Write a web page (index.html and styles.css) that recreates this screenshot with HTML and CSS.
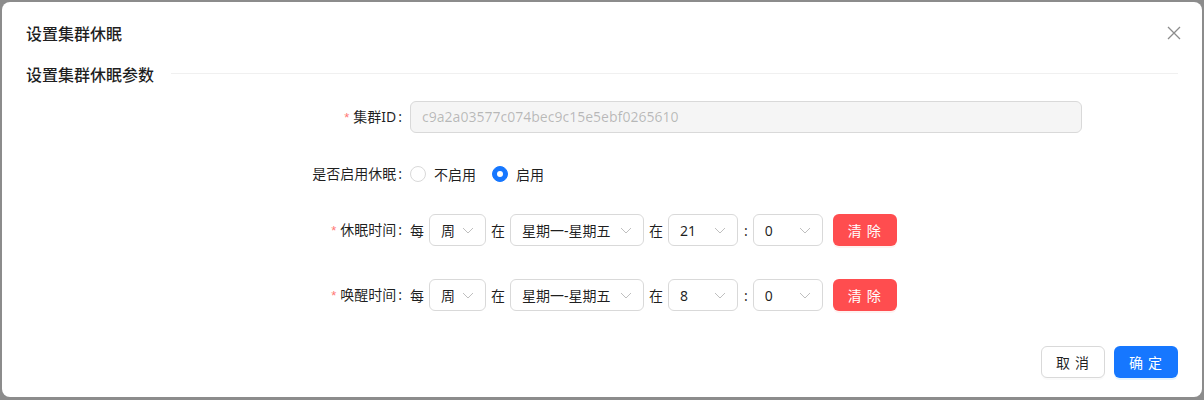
FILE: index.html
```html
<!DOCTYPE html>
<html lang="zh-CN">
<head>
<meta charset="utf-8">
<title>设置集群休眠</title>
<link rel="stylesheet" href="styles.css">
</head>
<body>
<div class="modal">
  <div class="modal-header">
    <div class="modal-title">设置集群休眠</div>
    <button class="close" aria-label="关闭">
      <svg width="14" height="14" viewBox="0 0 14 14"><path d="M1 1L13 13M13 1L1 13" stroke="#8c8c8c" stroke-width="1.3" fill="none"/></svg>
    </button>
  </div>
  <div class="divider"><span class="divider-text">设置集群休眠参数</span><span class="divider-line"></span></div>
  <form class="form">
    <div class="form-item item-id">
      <div class="label"><span class="req">*</span>集群ID<span class="colon">:</span></div>
      <div class="control">
        <div class="input disabled">c9a2a03577c074bec9c15e5ebf0265610</div>
      </div>
    </div>
    <div class="form-item item-radio">
      <div class="label">是否启用休眠<span class="colon">:</span></div>
      <div class="control">
        <label class="radio"><span class="radio-dot"></span><span class="radio-text">不启用</span></label>
        <label class="radio checked"><span class="radio-dot"></span><span class="radio-text">启用</span></label>
      </div>
    </div>
    <div class="form-item item-sleep">
      <div class="label"><span class="req">*</span>休眠时间<span class="colon">:</span></div>
      <div class="control">
        <span class="word first">每</span>
        <div class="select w-week"><span>周</span><svg class="arrow" width="12" height="12" viewBox="0 0 12 12"><path d="M1 4L6 9L11 4" stroke="#bfbfbf" stroke-width="1" fill="none"/></svg></div>
        <span class="word">在</span>
        <div class="select w-day"><span>星期一-星期五</span><svg class="arrow" width="12" height="12" viewBox="0 0 12 12"><path d="M1 4L6 9L11 4" stroke="#bfbfbf" stroke-width="1" fill="none"/></svg></div>
        <span class="word">在</span>
        <div class="select w-num"><span>21</span><svg class="arrow" width="12" height="12" viewBox="0 0 12 12"><path d="M1 4L6 9L11 4" stroke="#bfbfbf" stroke-width="1" fill="none"/></svg></div>
        <span class="word colon-word">:</span>
        <div class="select w-num"><span>0</span><svg class="arrow" width="12" height="12" viewBox="0 0 12 12"><path d="M1 4L6 9L11 4" stroke="#bfbfbf" stroke-width="1" fill="none"/></svg></div>
        <button type="button" class="btn danger">清 除</button>
      </div>
    </div>
    <div class="form-item item-wake">
      <div class="label"><span class="req">*</span>唤醒时间<span class="colon">:</span></div>
      <div class="control">
        <span class="word first">每</span>
        <div class="select w-week"><span>周</span><svg class="arrow" width="12" height="12" viewBox="0 0 12 12"><path d="M1 4L6 9L11 4" stroke="#bfbfbf" stroke-width="1" fill="none"/></svg></div>
        <span class="word">在</span>
        <div class="select w-day"><span>星期一-星期五</span><svg class="arrow" width="12" height="12" viewBox="0 0 12 12"><path d="M1 4L6 9L11 4" stroke="#bfbfbf" stroke-width="1" fill="none"/></svg></div>
        <span class="word">在</span>
        <div class="select w-num"><span>8</span><svg class="arrow" width="12" height="12" viewBox="0 0 12 12"><path d="M1 4L6 9L11 4" stroke="#bfbfbf" stroke-width="1" fill="none"/></svg></div>
        <span class="word colon-word">:</span>
        <div class="select w-num"><span>0</span><svg class="arrow" width="12" height="12" viewBox="0 0 12 12"><path d="M1 4L6 9L11 4" stroke="#bfbfbf" stroke-width="1" fill="none"/></svg></div>
        <button type="button" class="btn danger">清 除</button>
      </div>
    </div>
  </form>
  <div class="footer">
    <button type="button" class="btn default">取 消</button>
    <button type="button" class="btn primary">确 定</button>
  </div>
</div>
</body>
</html>
```
FILE: styles.css
```css
* { box-sizing: border-box; }
html, body { margin: 0; height: 400px; overflow: hidden; }
body {
  background: #8c8c8c;
  padding: 2px 2px 3px 2px;
  font-family: "Noto Sans", "Noto Sans CJK SC", sans-serif;
  font-size: 14px;
  color: rgba(0, 0, 0, 0.88);
}
.modal {
  background: #fff;
  border-radius: 8px;
  height: 395px;
  padding: 20px 24px 0 24px;
}
.modal-header {
  display: flex;
  align-items: center;
  justify-content: space-between;
  height: 22px;
}
.modal-title {
  font-family: "Noto Sans CJK SC", sans-serif;
  font-size: 16px;
  font-weight: 500;
  line-height: 22px;
}
.close {
  border: 0;
  background: none;
  padding: 0;
  margin-right: -3px;
  width: 14px;
  height: 14px;
  display: flex;
}
.divider {
  display: flex;
  align-items: center;
  margin-top: 18px;
  height: 24px;
}
.divider-text {
  font-family: "Noto Sans CJK SC", sans-serif;
  font-size: 16px;
  font-weight: 500;
  line-height: 24px;
}
.divider-line {
  flex: 1;
  border-top: 1px solid #f0f0f0;
  margin-left: 17px;
  margin-top: -2px;
}
.form { margin-top: 15px; }
.form-item {
  display: flex;
  align-items: center;
  height: 32px;
  margin-bottom: 24px;
}
.item-id { margin-bottom: 25px; }
.item-sleep { margin-bottom: 33px; }
.label {
  width: 384px;
  flex: none;
  text-align: right;
  padding-right: 8px;
  line-height: 32px;
  white-space: nowrap;
}
.req {
  color: #ff7875;
  margin-right: 4px;
  font-family: "Liberation Sans", sans-serif;
  font-size: 13px;
}
.colon { margin-left: 2px; }
.control {
  width: 672px;
  display: flex;
  align-items: center;
  height: 32px;
}
.input {
  width: 100%;
  height: 32px;
  border: 1px solid #d9d9d9;
  border-radius: 6px;
  padding: 0 11px;
  line-height: 30px;
}
.input.disabled {
  background: #f5f5f5;
  color: rgba(0, 0, 0, 0.25);
}
.radio {
  display: inline-flex;
  align-items: center;
  margin-right: 8px;
  cursor: pointer;
}
.radio-dot {
  width: 16px;
  height: 16px;
  border: 1px solid #d9d9d9;
  border-radius: 50%;
  background: #fff;
  position: relative;
}
.radio.checked .radio-dot {
  background: #1677ff;
  border-color: #1677ff;
}
.radio.checked .radio-dot::after {
  content: "";
  position: absolute;
  left: 4px;
  top: 4px;
  width: 6px;
  height: 6px;
  border-radius: 50%;
  background: #fff;
}
.radio-text { padding: 0 8px; }
.word { margin: 0 5px; white-space: nowrap; }
.word.first { margin-left: 0; margin-right: 5px; }
.colon-word { margin: 0 5px 0 6px; }
.select {
  height: 32px;
  border: 1px solid #d9d9d9;
  border-radius: 6px;
  padding: 0 11px;
  display: flex;
  align-items: center;
  justify-content: space-between;
  white-space: nowrap;
  flex: none;
}
.w-week { width: 57px; }
.w-day { width: 134px; }
.w-num { width: 70px; }
.arrow { flex: none; }
.btn {
  height: 32px;
  width: 64px;
  border-radius: 6px;
  font-family: "Noto Sans CJK SC", sans-serif;
  font-size: 14px;
  letter-spacing: 1px;
  border: 1px solid transparent;
  padding: 0;
  cursor: pointer;
}
.btn.danger {
  background: #ff4d4f;
  color: #fff;
  margin-left: 10px;
  box-shadow: 0 2px 0 rgba(255, 38, 5, 0.06);
}
.footer {
  display: flex;
  justify-content: flex-end;
  gap: 9px;
  margin-top: 35px;
}
.btn.default {
  background: #fff;
  border-color: #d9d9d9;
  color: rgba(0, 0, 0, 0.88);
  box-shadow: 0 2px 0 rgba(0, 0, 0, 0.02);
}
.btn.primary {
  background: #1677ff;
  color: #fff;
  box-shadow: 0 2px 0 rgba(5, 145, 255, 0.1);
}
```
